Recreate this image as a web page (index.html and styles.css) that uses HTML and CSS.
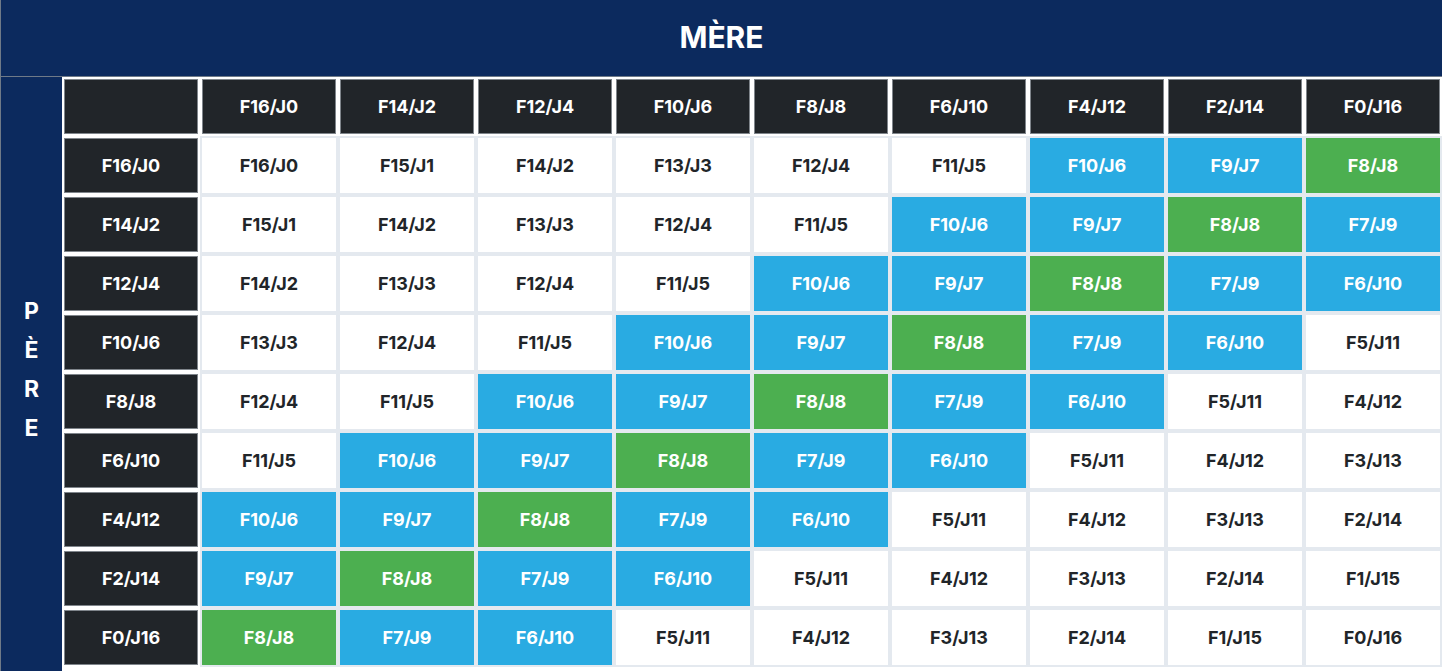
FILE: index.html
```html
<!DOCTYPE html>
<html lang="fr">
<head>
<meta charset="utf-8">
<title>Tableau</title>
<link rel="stylesheet" href="styles.css">
</head>
<body>
<div class="layout">
  <div class="mere">MÈRE</div>
  <div class="pere"><span>P</span><span>È</span><span>R</span><span>E</span></div>
  <div class="grid" id="grid"></div>
</div>
<script src="app.js"></script>
</body>
</html>
```
FILE: styles.css
```css
* { box-sizing: border-box; }
html, body { margin: 0; padding: 0; background: #ffffff; }
body { font-family: Inter, "Noto Sans", "Liberation Sans", sans-serif; width: 1442px; height: 671px; overflow: hidden; }
.layout {
  display: grid;
  grid-template-columns: 62px 1380px;
  grid-template-rows: 77px auto;
}
.mere {
  grid-column: 1 / 3;
  background: #0c2a5e;
  color: #ffffff;
  font-weight: 700;
  font-size: 30px;
  display: flex;
  align-items: center;
  justify-content: center;
  border-left: 1px solid #6f7a88;
  border-bottom: 1px solid #6f7a88;
  padding-bottom: 2px;
}
.pere {
  background: #0c2a5e;
  color: #ffffff;
  font-weight: 700;
  font-size: 23px;
  display: flex;
  flex-direction: column;
  align-items: center;
  justify-content: center;
  border-left: 1px solid #6f7a88;
  height: 594px;
  line-height: 39px;
  padding-bottom: 8px;
}
.grid {
  display: grid;
  grid-template-columns: repeat(10, 138px);
  grid-auto-rows: 59px;
}
.cell {
  display: flex;
  align-items: center;
  justify-content: center;
  font-weight: 700;
  font-size: 18px;
  border: 2px solid #e4e9ef;
  background: #ffffff;
  color: #212529;
}
.cell.head {
  background: #212529;
  color: #ffffff;
  border-color: #ffffff;
  box-shadow: inset 0 0 0 1px #7f858b;
}
.cell.blue { background: #29abe2; color: #ffffff; }
.cell.green { background: #4caf50; color: #ffffff; }
```
FILE: app.js
```js
(function () {
  var grid = document.getElementById('grid');
  var labels = [];
  for (var i = 0; i < 9; i++) { labels.push('F' + (16 - 2 * i) + '/J' + (2 * i)); }
  function add(text, cls) {
    var d = document.createElement('div');
    d.className = 'cell ' + cls;
    d.textContent = text;
    grid.appendChild(d);
  }
  add('', 'head');
  labels.forEach(function (l) { add(l, 'head'); });
  for (var r = 0; r < 9; r++) {
    add(labels[r], 'head');
    for (var c = 0; c < 9; c++) {
      var f = 16 - r - c;
      var cls = '';
      if (f === 8) cls = 'green';
      else if (f >= 6 && f <= 10) cls = 'blue';
      add('F' + f + '/J' + (16 - f), cls);
    }
  }
})();
```
